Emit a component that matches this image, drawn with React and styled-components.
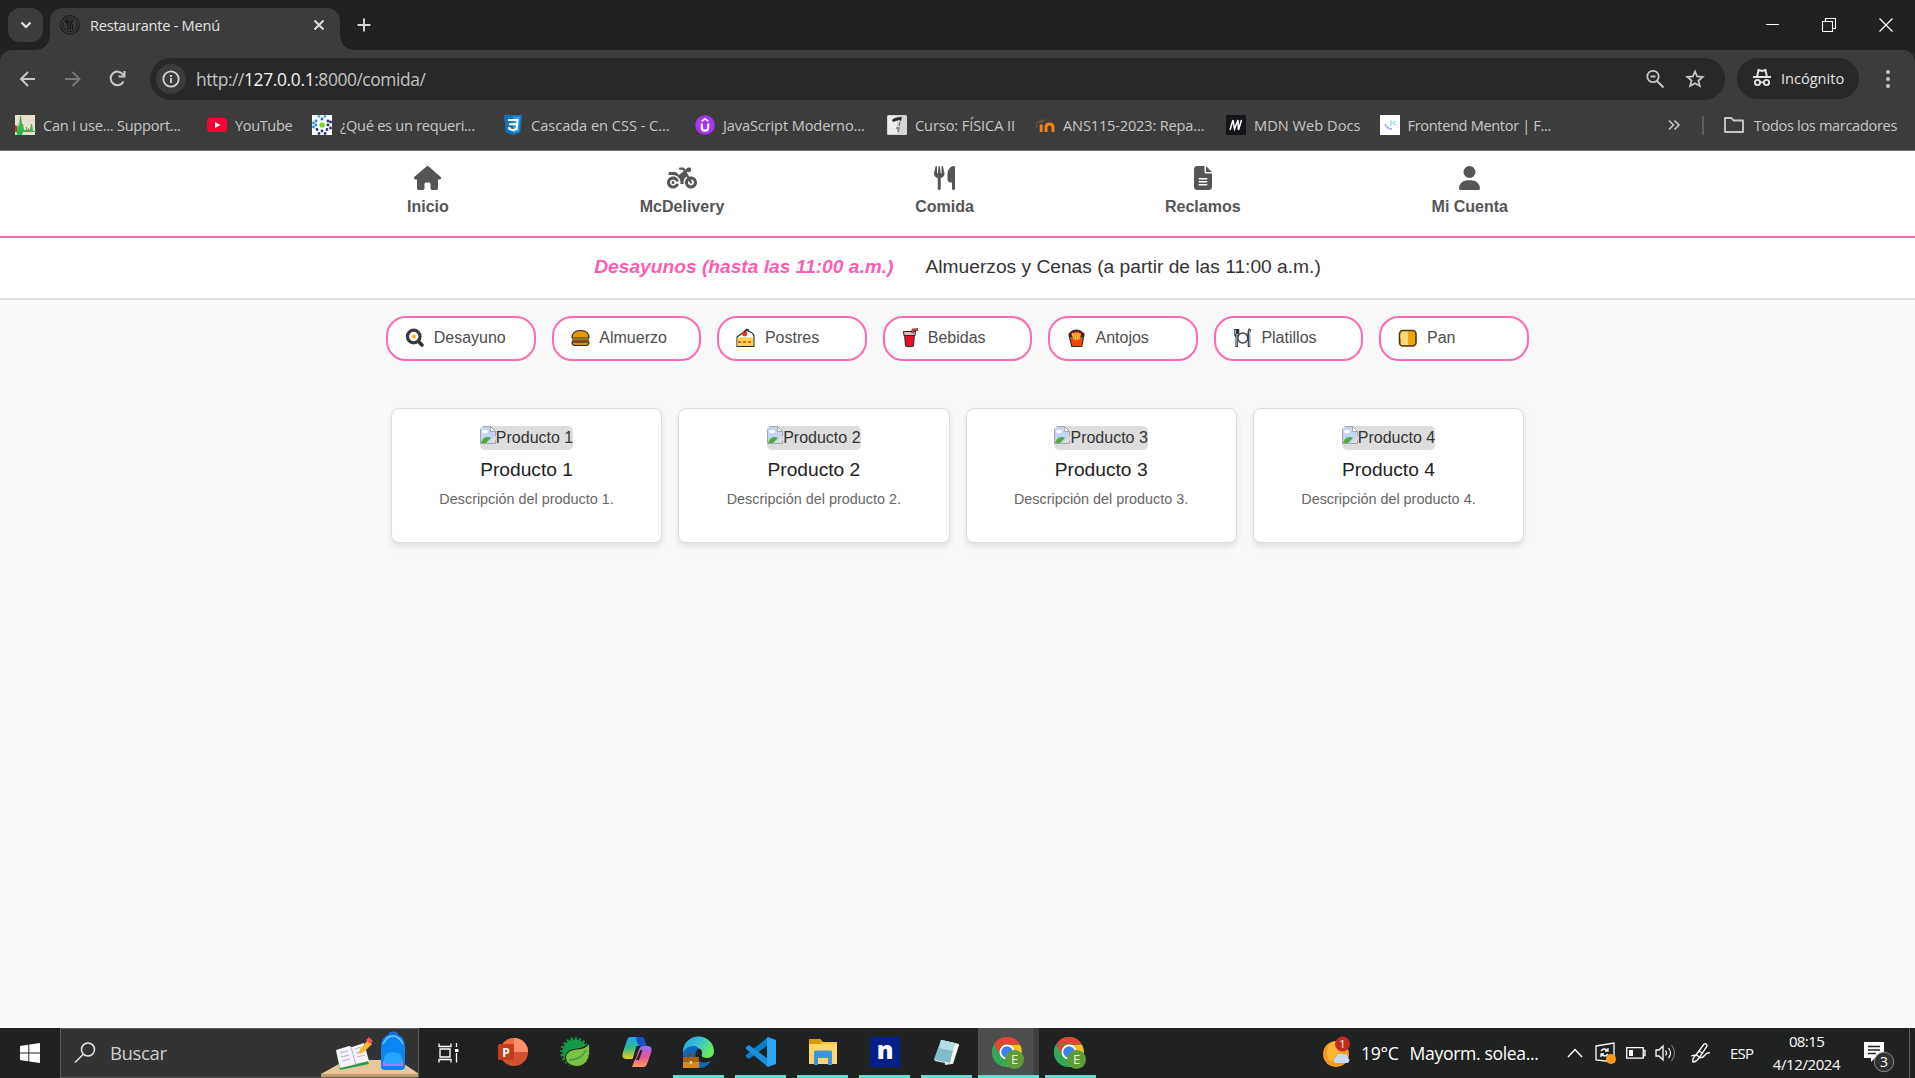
import React from "react";
import styled, { createGlobalStyle } from "styled-components";
import { FaHouse, FaMotorcycle, FaUtensils, FaFileLines, FaUser } from "react-icons/fa6";

const ui = `"Segoe UI", "Open Sans", "Noto Sans", sans-serif`;

const Global = createGlobalStyle`
  * { box-sizing: border-box; }
  body { margin: 0; overflow: hidden; font-family: Arial, "Liberation Sans", sans-serif; }
  svg { display: block; flex: none; overflow: visible; }
`;

const Screen = styled.div`
  width: 1915px;
  height: 1078px;
  display: flex;
  flex-direction: column;
  overflow: hidden;
`;

/* ---------- browser ---------- */
const TabStrip = styled.div`
  height: 50px;
  flex: none;
  background: #202221;
  display: flex;
  align-items: flex-end;
`;
const TabSearch = styled.div`
  width: 35px;
  height: 34px;
  margin: 0 7px 8px 8px;
  border-radius: 12px;
  background: #3c3c3c;
  display: flex;
  align-items: center;
  justify-content: center;
`;
const Tab = styled.div`
  position: relative;
  width: 290px;
  height: 42px;
  padding: 0 14px 8px 10px;
  border-radius: 13px 13px 0 0;
  background: #3c3c3c;
  display: flex;
  align-items: center;
  &::before, &::after {
    content: "";
    position: absolute;
    bottom: 0;
    width: 14px;
    height: 14px;
  }
  &::before { left: -14px; background: radial-gradient(circle at 0 0, transparent 13.5px, #3c3c3c 14px); }
  &::after { right: -14px; background: radial-gradient(circle at 100% 0, transparent 13.5px, #3c3c3c 14px); }
`;
const Label = styled.span`
  font-family: ${ui};
  font-size: ${(p) => p.$size || 15}px;
  letter-spacing: ${(p) => p.$ls || 0}px;
  color: ${(p) => p.$color || "#e3e3e3"};
  line-height: 22px;
  white-space: nowrap;
`;
const TabTitle = styled(Label)`
  flex: 1;
  margin-left: 10px;
`;
const NewTab = styled.div`
  margin: 0 0 18px 17px;
`;
const WindowButtons = styled.div`
  margin: 0 22px 18px auto;
  display: flex;
  gap: 43px;
`;
const ToolbarShell = styled.div`
  flex: none;
  height: 101px;
  background: #202221;
`;
const Toolbar = styled.div`
  height: 101px;
  background: #3c3c3c;
  border-radius: 12px 12px 0 0;
  border-bottom: 1px solid #747474;
`;
const AddressRow = styled.div`
  height: 50px;
  padding: 8px 17px 0 18px;
  display: flex;
  align-items: flex-start;
`;
const NavButtons = styled.div`
  width: 132px;
  height: 42px;
  display: flex;
  align-items: center;
  gap: 25px;
`;
const Omnibox = styled.div`
  width: 1575px;
  height: 42px;
  border-radius: 21px;
  background: #282828;
  padding: 0 20px 0 6px;
  display: flex;
  align-items: center;
`;
const InfoBadge = styled.div`
  width: 30px;
  height: 30px;
  border-radius: 50%;
  background: #3c3c3c;
  display: flex;
  align-items: center;
  justify-content: center;
  margin-right: 10px;
`;
const Url = styled(Label)`
  flex: 1;
  b { font-weight: 400; color: #f2f2f2; letter-spacing: -0.35px; }
`;
const OmniIcons = styled.div`
  display: flex;
  gap: 20px;
`;
const Incognito = styled.div`
  width: 122px;
  height: 41px;
  margin-left: 12px;
  padding: 0 0 2px 14px;
  border-radius: 21px;
  background: #282828;
  display: flex;
  align-items: center;
  gap: 8px;
`;
const Dots = styled.div`
  width: 20px;
  height: 42px;
  margin-left: auto;
  display: flex;
  flex-direction: column;
  align-items: center;
  justify-content: center;
  gap: 3px;
  i { width: 4px; height: 4px; border-radius: 50%; background: #c7c7c7; }
`;
const Bookmarks = styled.div`
  height: 50px;
  padding: 0 18px 0 15px;
  display: flex;
  align-items: center;
`;
const Bookmark = styled.div`
  width: ${(p) => p.$w}px;
  display: flex;
  align-items: center;
  gap: 8px;
  ${Label} { margin-top: -1px; }
`;
const AllBookmarks = styled.div`
  margin-left: auto;
  display: flex;
  align-items: center;
  ${Label} { margin: -1px 0 0 10px; }
`;
const Divider = styled.div`
  width: 2px;
  height: 19px;
  background: #5e5e5e;
  margin: 0 20px 0 22px;
`;

/* ---------- page ---------- */
const Page = styled.main`
  flex: 1;
  background: #f9f9f9;
`;
const MainNav = styled.nav`
  height: 87px;
  background: #fff;
  border-bottom: 2px solid #ff69b4;
  display: flex;
  justify-content: center;
  gap: 191px;
  padding-top: 15px;
`;
const NavLink = styled.a`
  display: flex;
  flex-direction: column;
  align-items: center;
  font-size: 16px;
  line-height: 18px;
  font-weight: 700;
  color: #555;
  gap: 8px;
  svg { width: ${(p) => p.$iw}px; height: 24px; }
`;
const Schedule = styled.div`
  height: 62px;
  background: #fff;
  border-bottom: 2px solid #e0e0e0;
  display: flex;
  justify-content: center;
  gap: 32px;
  padding-top: 18px;
  font-size: 19.2px;
  line-height: 22px;
`;
const ScheduleItem = styled.span`
  color: ${(p) => (p.$active ? "#ff5cb4" : "#333")};
  font-weight: ${(p) => (p.$active ? 700 : 400)};
  font-style: ${(p) => (p.$active ? "italic" : "normal")};
`;
const Categories = styled.div`
  display: flex;
  justify-content: center;
  gap: 16px;
  padding-top: 16px;
`;
const Pill = styled.div`
  width: 149.6px;
  height: 44.5px;
  border: 2px solid #ff69b4;
  border-radius: 20px;
  background: #fff;
  padding: 0 0 1px 17px;
  display: flex;
  align-items: center;
  font-size: 16px;
  line-height: 18px;
  color: #4d4d4d;
`;
const PillIcon = styled.span`
  width: ${(p) => p.$w}px;
  flex: none;
`;
const Products = styled.div`
  display: flex;
  justify-content: center;
  gap: 16px;
  padding-top: 47.5px;
`;
const Card = styled.article`
  width: 271.3px;
  height: 135px;
  background: #fff;
  border: 1px solid #ddd;
  border-radius: 8px;
  box-shadow: 0 4px 6px rgba(0, 0, 0, 0.1);
  padding-top: 17px;
  display: flex;
  flex-direction: column;
  align-items: center;
`;
const Missing = styled.div`
  height: 24px;
  border-radius: 5px;
  background: #ddd;
  display: flex;
  overflow: hidden;
  font-size: 16px;
  line-height: 23px;
  color: #333;
`;
const CardTitle = styled.h3`
  margin: 9px 0 10px;
  font-size: 19.2px;
  line-height: 22px;
  font-weight: 400;
  color: #222;
`;
const CardText = styled.p`
  margin: 0;
  font-size: 14.4px;
  line-height: 17px;
  color: #666;
`;

/* ---------- taskbar ---------- */
const Taskbar = styled.footer`
  flex: none;
  height: 50px;
  background: #202221;
  display: flex;
`;
const Start = styled.div`
  width: 60px;
  display: flex;
  align-items: center;
  justify-content: center;
`;
const SearchBox = styled.div`
  width: 359px;
  height: 50px;
  border: 1px solid #5c5c5c;
  background: #333;
  padding-left: 13px;
  display: flex;
  align-items: center;
  overflow: hidden;
`;
const SearchText = styled(Label)`
  flex: 1;
  margin-left: 14px;
`;
const TaskView = styled.div`
  width: 68px;
  padding-left: 19px;
  display: flex;
  align-items: center;
`;
const AppSlot = styled.div`
  width: ${(p) => p.$w || 51}px;
  margin-right: ${(p) => (p.$mr === undefined ? 11 : p.$mr)}px;
  background: ${(p) => (p.$active ? "linear-gradient(90deg, #4d4e4e 55px, #3d3e3e 56px)" : "none")};
  border-bottom: 3px solid ${(p) => (p.$open ? "#66dccf" : "transparent")};
  padding: ${(p) => p.$pad || "1px 0 0"};
  display: flex;
  align-items: center;
  justify-content: center;
`;
const Tray = styled.div`
  flex: 1;
  display: flex;
  align-items: center;
  justify-content: flex-end;
`;
const Weather = styled.div`
  width: 244px;
  display: flex;
  align-items: center;
  gap: 11px;
`;
const TrayIcon = styled.div`
  width: ${(p) => p.$w}px;
`;
const Clock = styled.div`
  width: 83px;
  display: flex;
  flex-direction: column;
  align-items: center;
  gap: 1px;
  padding-bottom: 2px;
`;
const Notice = styled.div`
  width: 61px;
  padding: 7px 0 0 16px;
`;
const DesktopEdge = styled.div`
  width: 6px;
  height: 50px;
  border-left: 1px solid #5f6160;
`;

/* ---------- drawings ---------- */
const S = ({ w = 20, h = w, vb, children }) => (
  <svg width={w} height={h} viewBox={vb || `0 0 ${w} ${h}`} fill="none">{children}</svg>
);
const line = (c = "#c7c7c7", w = 2) => ({ stroke: c, strokeWidth: w, fill: "none" });

const Favicon = () => (
  <S><circle cx="10" cy="10" r="9.3" {...line("#1c1c1c", 1.2)} /><circle cx="10" cy="10" r="6.8" {...line("#1c1c1c", 1)} />
    <path d="M7 5v3.5q0 1.5 1 1.5V15M6 5v3M8.3 5v4M12.5 5q-1.5 3 0 5v5M10.3 5v10" {...line("#1c1c1c", 1.3)} /></S>
);
const bmIcons = {
  caniuse: <S><path fill="#eadfcd" d="M0 0h20v20H0z" /><path fill="#c83b2c" d="M0 10l2 1 1 5h9l2-3 1 4h5v-1H0z" /><path fill="#36b34a" d="M0 16h2l1-8 1 4 1-11h1l1 8h1l1 6h2v-3h1v4h3l1-7h1l1 7h3v1H8l-1 3H2v-2l-2-1z" /></S>,
  youtube: <S><rect y="3" width="20" height="14" rx="3.5" fill="#f03" /><path d="M8 7l5.500 3L8 13z" fill="#fff" /></S>,
  que: <S><path fill="#fff" d="M0 0h20v20H0z" /><circle cx="10" cy="10" r="2.6" fill="#6ddc12" />
    {[[10,4,"#1c6fd0"],[7,1.4,"#45a9e8"],[13,1.4,"#45a9e8"],[4,6,"#2b86d9"],[16,6,"#27336f"],[1.5,8,"#2b86d9"],[1.5,12,"#2b86d9"],[4,10,"#2b86d9"],[16,10,"#27336f"],[18.5,7,"#27336f"],[18.5,13,"#27336f"],[5,14.5,"#27336f"],[10,16,"#27336f"],[15,14.5,"#27336f"],[7,18.5,"#27336f"],[13,18.5,"#27336f"]].map(([x,y,c]) => <circle key={`${x}-${y}`} cx={x} cy={y} r="1.4" fill={c} />)}</S>,
  css: <S><path fill="#1572b6" d="M1 0h18l-1.600 17.500L10 20l-7.400-2.500z" /><path fill="#2ca0dc" d="M10 1.500h7.400L16 16.500l-6 2z" /><path d="M5 5h9.500l-.9 9-3.600 1.300L6.300 14l-.2-2M14 9.300H6" {...line("#fff", 2)} /></S>,
  udemy: <S><circle cx="10" cy="10" r="9.8" fill="#a435f0" /><path d="M6.800 8.500v4.200q0 3 3.200 3t3.200-3V8.500" {...line("#fff", 2.2)} /><path d="M6.500 6.300L10 3.800l3.500 2.500" {...line("#fff", 1.6)} /></S>,
  fisica: <S><rect width="20" height="20" rx="1.5" fill="#d5d5d5" /><path fill="#eee" d="M1 1h9v18H1z" /><path fill="#2c2c2c" d="M5 5q2-3 10-3l-1 4-2-1-6 2z" /><path d="M13 7l-1 4M9 13l3 0-1 4" {...line("#777", 1.3)} /></S>,
  moodle: <S><path d="M0 8l7-4 3 1-2 3z" fill="#5d4c43" /><path d="M6.200 17V9.500" {...line("#f98012", 3)} /><path d="M11 17v-4.500q0-3.500 3.500-3.500t3.500 3.500V17" {...line("#f98012", 3)} /><path d="M1.500 8v5" {...line("#6c4b34", 1.5)} /></S>,
  mdn: <S><path fill="#15141a" d="M0 0h20v20H0z" /><path d="M4 15l3-10 1.500 9L12 5l.5 10L15.500 5" {...line("#fff", 1.5)} /></S>,
  fm: <S><path fill="#fff" d="M0 0h20v20H0z" /><path d="M5 9q2 5 7 5" {...line("#a9b4e4", 1.8)} /><path d="M11 5v6M15.500 6L13 8l2.500 2" {...line("#8fd8e8", 1.3)} /></S>,
};

const bookmarks = [
  ["caniuse", "Can I use... Support...", 192, -0.26],
  ["youtube", "YouTube", 105, -0.4],
  ["que", "¿Qué es un requeri...", 191, -0.28],
  ["css", "Cascada en CSS - C...", 192, -0.03],
  ["udemy", "JavaScript Moderno...", 192, -0.12],
  ["fisica", "Curso: FÍSICA II", 148, -0.1],
  ["moodle", "ANS115-2023: Repa...", 191, -0.17],
  ["mdn", "MDN Web Docs", 153.5, 0.02],
  ["fm", "Frontend Mentor | F...", 180, -0.35],
];

const ink = { stroke: "#2b2b2b", strokeWidth: 1.1, strokeLinejoin: "round" };
const emoji = {
  pan: <S><path d="M13 13l4 4" stroke="#333" strokeWidth="3.6" strokeLinecap="round" /><circle cx="8.7" cy="8.5" r="6.3" fill="#fff" stroke="#3a3a3a" strokeWidth="3.2" /><circle cx="9" cy="8.5" r="1.9" fill="#f9b21c" /></S>,
  burger: <S><path {...ink} fill="#e09a0a" d="M1 10q0-7.500 8.500-7.500T18 10z" /><path d="M1 11h17" stroke="#8a7a1f" strokeWidth="2" /><path d="M1 13h17" stroke="#a5522b" strokeWidth="2.2" /><path {...ink} fill="#d68f12" d="M1 14h17q0 3.500-3 3.500H4q-3 0-3-3.500z" /></S>,
  cake: <S><path {...ink} fill="#fff" d="M1 9l9-6.500q8 1.500 8 6.500v9.500H1z" /><path fill="#fbd44a" d="M1.500 9.500h15.500v8.500H1.500z" /><path d="M2 14h14" stroke="#e8602a" strokeWidth="2.2" strokeDasharray="3 2" /><path fill="#e03a20" d="M5.500 5q3-4 6 0l-1 3q-3 1-4-1z" /><path d="M8 4l3-2.500 2 1" stroke="#2b2b2b" strokeWidth="1.5" /></S>,
  drink: <S><path {...ink} fill="#e81224" d="M2.500 5h10l-1 13q-4 1.500-8 0z" /><path {...ink} fill="#e9b9bd" d="M1.500 3.500h12l-.5 4H2z" /><path d="M10 5l1-3 5-.5" stroke="#2b2b2b" strokeWidth="2.6" /><path d="M10 5l1-3 5-.5" stroke="#e8424f" strokeWidth="1.4" /></S>,
  fries: <S><path {...ink} fill="#8b1010" d="M2 6q7-8 15 0l-2 3H4z" /><path {...ink} fill="#f2450f" d="M2 7q7 6 15 0l-2.200 11.500h-10z" /><path fill="#fbb840" d="M4.500 5.500l1.500-1 1 1 1.500-1.500 1.500 1 1.500-1 1 1.500 1.500 0-1 5.500q-3 2-7 0z" /><path d="M7 5v6M9.500 4.500v7M12 5v6" stroke="#e47b18" strokeWidth=".8" /></S>,
  plate: <S><circle cx="9.8" cy="10" r="5" fill="#fff" stroke="#444" strokeWidth="1.5" /><path d="M2.500 1v5q0 2 1.300 2v11M5 1v5M17 1q-2 3-1 8v10" stroke="#29363d" strokeWidth="2.6" /><path d="M2.500 2v4M3.800 6v12M16.400 2v16" stroke="#9fc0cf" strokeWidth="1" /></S>,
  bread: <S><rect x="1.5" y="2.5" width="16.5" height="15.5" rx="3.5" fill="#eda508" stroke="#4a3615" strokeWidth="1.6" /><path fill="#ffd77c" d="M4.500 3.500h5.500v13.500H3.200V12q-1.500-3-.5-6.500z" /></S>,
};
const categories = [
  ["pan", "Desayuno", 28.8], ["burger", "Almuerzo", 28.8], ["cake", "Postres", 28.8], ["drink", "Bebidas", 26], ["fries", "Antojos", 28.2], ["plate", "Platillos", 28.5], ["bread", "Pan", 28.5],
];

const BrokenImage = () => (
  <S w={16} h={18}><path d="M.5 .5h10l5 5v12H.5z" fill="#c3d5f5" stroke="#a5a5a5" /><path d="M10.500 .5v5h5z" fill="#fff" stroke="#a5a5a5" /><ellipse cx="5" cy="5.5" rx="3" ry="1.8" fill="#fff" /><path d="M1 17q2-6 6-6 3 0 4 1l-5 5z" fill="#53a93f" /><path d="M7 18L16 9.500V18z" fill="#ddd" /><path d="M8 17.500h7.500v-3" stroke="#a5a5a5" fill="none" /></S>
);

const Chrome = () => (
  <S w={33} h={34}><circle cx="15" cy="15" r="15" fill="#34a853" /><path d="M2 7.500A15 15 0 0 1 28 7.500H15z" fill="#ea4335" /><path d="M15 8h13A15 15 0 0 1 15 30l6.500-11z" fill="#fbc116" /><path d="M2 7.500l6.800 11.500L15 8z" fill="#ea4335" /><path d="M2 7.500L9 19.500 15 22.500 13 30A15 15 0 0 1 2 7.500z" fill="#34a853" /><circle cx="15" cy="15" r="7.5" fill="#fff" /><circle cx="15" cy="15" r="5.8" fill="#3b82ee" /><circle cx="22.5" cy="22.5" r="9.5" fill="#5f9b38" /><text x="22.5" y="27.3" textAnchor="middle" fontFamily="Open Sans" fontSize="13" fill="#e6f2dc">E</text></S>
);
const appIcons = {
  ppt: <S w={30}><circle cx="16" cy="15" r="14" fill="#d35230" /><path d="M16 1A14 14 0 0 0 2 15h14z" fill="#ed6c47" /><path d="M16 1a14 14 0 0 1 14 14H16z" fill="#ff8f6b" /><rect y="7" width="16" height="16" rx="1.5" fill="#c43e1c" /><text x="8" y="19.5" textAnchor="middle" fontFamily="Open Sans" fontWeight="700" fontSize="12" fill="#fff">P</text></S>,
  spring: <S w={30}><circle cx="15" cy="15" r="12.5" fill="#159947" /><circle cx="15" cy="15" r="13.5" fill="none" stroke="#159947" strokeWidth="2.5" strokeDasharray="2.2 2" /><path d="M30 4Q31 30 16 30 5 29 5 20 6 12 17 11.500 26 11 30 4z" fill="#202221" /><path d="M29 7q2 22-13 22-10-1-10-9 1-7 11-7.500Q26 12 29 7z" fill="#7bc142" /><path d="M9 23q12 0 17-10" {...line("#3b9b45", 1.5)} /></S>,
  copilot: <S w={30} h={32}>
    <defs><linearGradient id="cpA" x1="0" y1="0" x2="0" y2="1"><stop offset="0" stopColor="#1ca9f5" /><stop offset=".5" stopColor="#31bd85" /><stop offset="1" stopColor="#f6cd20" /></linearGradient><linearGradient id="cpB" x1="0" y1="0" x2="0" y2="1"><stop offset="0" stopColor="#9a6cf3" /><stop offset=".5" stopColor="#e5559a" /><stop offset="1" stopColor="#ff9a63" /></linearGradient></defs>
    <path d="M8 1h12l-6 20q-1 2-4 2H4q-5 0-3-7L5 4q1-3 3-3z" fill="url(#cpA)" /><path d="M14 1h6q2 0 3 4l2 5h-6q-3 0-4-4z" fill="#1b50c8" /><path d="M21 10h5q5 0 3 7l-4 11q-1 3-4 3H10l7-18q1-3 4-3z" fill="url(#cpB)" /><path d="M14.500 10h3.500l-4.500 13h-3z" fill="#202221" /><path d="M18.500 14l2 0-3.500 10h-3z" fill="#202221" /></S>,
  edge: <S w={31}>
    <defs><linearGradient id="edA" x1="0" y1="0" x2="1" y2=".5"><stop offset="0" stopColor="#2b9fe0" /><stop offset=".5" stopColor="#35c1d8" /><stop offset="1" stopColor="#6bea5b" /></linearGradient></defs>
    <path d="M0 15A15.500 15 0 0 1 31 14q0 7-7 7-7-.5-5-4 1-6-6-6Q3 11 0 20z" fill="url(#edA)" /><path d="M0 16q3-8 12-7 3 .5 3 3-4 4-2 9 4 7 15 3-5 8-14 7Q0 29 0 16z" fill="#1268b8" /><path d="M0 20h16v11H0z" fill="#d78a1c" /><path d="M0 20h16v5H0z" fill="#a96012" /><path d="M5 20v-2h6v2" {...line("#7f4a14", 1.5)} /><path d="M7 24h2v3H7z" fill="#ffe08a" /></S>,
  vscode: <S w={30}><path d="M22 0v8L3 22 0 20v-2z" fill="#0a7cc8" /><path d="M22 30v-8L3 8 0 10v2z" fill="#1a8fdb" /><path d="M22 0l8 3v24l-8 3-1-1V1z" fill="#2ba4f3" /></S>,
  folder: <S w={28} h={28}><path d="M0 1h11l3 3h14v22H0z" fill="#f8c73e" /><path d="M0 1h11l2 3-2 2H0z" fill="#dc9a0b" /><path d="M0 6h28v20H0z" fill="#ffd766" /><path d="M5 14q0-1.500 1.500-1.500h15q1.500 0 1.500 1.500v13h-4v-7H9v7H5z" fill="#3a95dc" /></S>,
  n: <S w={30}><path fill="#03208a" d="M0 0h30v30H0z" /><text x="15" y="22" textAnchor="middle" fontFamily="Open Sans" fontWeight="800" fontSize="25" fill="#fff">n</text></S>,
  notepad: <S w={28} h={28}><path d="M9 2l17 4-7 20-7 1z" fill="#e6e5df" /><path d="M8 2l14 3-5 20L1 21z" fill="#82bccb" /><path d="M8 2l14 3-2 8-14-3z" fill="#b7dce3" /><path d="M22 5l4 2-6 19-3-1z" fill="#f6f5f0" /><path d="M1 21l16 4v1L2 23z" fill="#d9e5e8" /></S>,
};

const apps = [
  { icon: "ppt" }, { icon: "spring" }, { icon: "copilot" }, { icon: "edge", open: 1 }, { icon: "vscode", open: 1 },
  { icon: "folder", open: 1 }, { icon: "n", open: 1 }, { icon: "notepad", open: 1, mr: 6 },
];

export default function App() {
  return (
    <Screen>
      <Global />
      <TabStrip>
        <TabSearch><S w={12}><path d="M1.500 3.500L6 8l4.500-4.500" {...line("#e3e3e3", 2.2)} /></S></TabSearch>
        <Tab>
          <Favicon />
          <TabTitle $size={14.6} $ls={-0.25}>Restaurante - Menú</TabTitle>
          <S w={14}><path d="M2.500 2.500l9 9M11.500 2.500l-9 9" {...line("#e3e3e3", 1.8)} /></S>
        </Tab>
        <NewTab><S w={14}><path d="M7 .5v13M.5 7h13" {...line("#d6d6d6", 1.9)} /></S></NewTab>
        <WindowButtons>
          <S w={14}><path d="M1 6.500h13" {...line("#fff", 1)} /></S>
          <S w={14}><path d="M.5 3.500h10v10H.5zM3.500 3V.5h10v10H11" {...line("#fff", 1.1)} /></S>
          <S w={14}><path d="M.5 .5l13 13M13.500 .5l-13 13" {...line("#fff", 1.2)} /></S>
        </WindowButtons>
      </TabStrip>
      <ToolbarShell>
        <Toolbar>
          <AddressRow>
            <NavButtons>
              <S><path d="M17 10H3.500M10 3l-7 7 7 7" {...line()} /></S>
              <S><path d="M2 10h13.500M9.500 3l7 7-7 7" {...line("#777")} /></S>
              <S><path d="M15.500 12.500A6.800 6.800 0 1 1 15 5.500L16.500 7.500M16.500 2V7.500h-6" {...line()} /></S>
            </NavButtons>
            <Omnibox>
              <InfoBadge><S w={18}><circle cx="9" cy="9" r="7.7" {...line("#d6d6d6", 1.8)} /><path d="M9 8v5M9 5v2" {...line("#d6d6d6", 1.8)} /></S></InfoBadge>
              <Url $size={17.4} $ls={-0.43} $color="#c3c3c3">http://<b>127.0.0.1</b>:8000/comida/</Url>
              <OmniIcons>
                <S><circle cx="8" cy="7.5" r="5.7" {...line("#c7c7c7", 1.8)} /><path d="M12 12l6.500 6.500M5.500 7.500h5" {...line()} /></S>
                <S><path d="M10 2.500l2.200 5 5.500.5-4.200 3.600 1.300 5.400L10 14.200 5.200 17l1.300-5.400L2.300 8l5.500-.5z" {...line("#c7c7c7", 1.8)} /></S>
              </OmniIcons>
            </Omnibox>
            <Incognito>
              <S w={22}><path d="M6 10l1.500-7 3.500 1 3.500-1L16 10z" {...line("#e3e3e3", 2)} /><path d="M2 10h18" {...line("#e3e3e3", 2)} /><circle cx="6.5" cy="15.5" r="2.6" {...line("#e3e3e3", 1.9)} /><circle cx="15.5" cy="15.5" r="2.6" {...line("#e3e3e3", 1.9)} /><path d="M9 15.300h4" {...line("#e3e3e3", 1.8)} /></S>
              <Label $size={14.6} $ls={-0.02}>Incógnito</Label>
            </Incognito>
            <Dots><i /><i /><i /></Dots>
          </AddressRow>
          <Bookmarks>
            {bookmarks.map(([k, t, w, ls]) => (
              <Bookmark key={k} $w={w}>{bmIcons[k]}<Label $size={14.6} $ls={ls} $color="#c7c7c7">{t}</Label></Bookmark>
            ))}
            <AllBookmarks>
              <S w={12}><path d="M1 1.500L5.500 6 1 10.500M6.500 1.500L11 6l-4.500 4.500" {...line("#c7c7c7", 1.6)} /></S>
              <Divider />
              <S w={20} h={18}><path d="M1 2h6.500l2 2.500H19V16H1z" strokeLinejoin="round" {...line("#c7c7c7", 1.9)} /></S>
              <Label $size={14.6} $ls={-0.34} $color="#c7c7c7">Todos los marcadores</Label>
            </AllBookmarks>
          </Bookmarks>
        </Toolbar>
      </ToolbarShell>

      <Page>
        <MainNav>
          <NavLink $iw={27}><FaHouse />Inicio</NavLink>
          <NavLink $iw={30}><FaMotorcycle />McDelivery</NavLink>
          <NavLink $iw={21}><FaUtensils />Comida</NavLink>
          <NavLink $iw={18}><FaFileLines />Reclamos</NavLink>
          <NavLink $iw={21}><FaUser />Mi Cuenta</NavLink>
        </MainNav>
        <Schedule>
          <ScheduleItem $active>Desayunos (hasta las 11:00 a.m.)</ScheduleItem>
          <ScheduleItem>Almuerzos y Cenas (a partir de las 11:00 a.m.)</ScheduleItem>
        </Schedule>
        <Categories>
          {categories.map(([k, t, w]) => <Pill key={k}><PillIcon $w={w}>{emoji[k]}</PillIcon>{t}</Pill>)}
        </Categories>
        <Products>
          {[1, 2, 3, 4].map((n) => (
            <Card key={n}>
              <Missing><BrokenImage />Producto {n}</Missing>
              <CardTitle>Producto {n}</CardTitle>
              <CardText>Descripción del producto {n}.</CardText>
            </Card>
          ))}
        </Products>
      </Page>

      <Taskbar>
        <Start><S><path fill="#fff" d="M0 3l8.300-1.200v7.700H0zM9.300 1.600L20 0v9.500H9.300zM0 10.500h8.300v7.700L0 17zM9.300 10.500H20V20L9.300 18.400z" /></S></Start>
        <SearchBox>
          <S w={22}><circle cx="14" cy="7.5" r="6.5" {...line("#e8e8e8", 1.5)} /><path d="M9.500 12L1 20.500" {...line("#e8e8e8", 1.5)} /></S>
          <SearchText $size={18.6} $ls={-0.4} $color="#cfcfcf">Buscar</SearchText>
          <S w={97} h={50}>
            <path d="M0 46l25-14h52l21 14z" fill="#e9c79b" /><path d="M0 46h98v4H0z" fill="#c09a6a" />
            <path d="M15 24l4 18 29-6-3-7z" fill="#2f9a48" /><path d="M15 22l13-4 3 1 12-4 5 18-13 3-3 1-13 3z" fill="#f6f3fb" /><path d="M30 19l5 18" {...line("#b9b2cf", 1)} /><path d="M19 25l8-2M20 29l8-2M21 33l8-2M34 21l6-2M35 25l8-2M36 29l8-2" {...line("#aaa3bf", 0.8)} />
            <path d="M38 26l1-5 8-9 4 4-8 8z" fill="#f8b632" /><path d="M45 12l3-3 4 4-3 3z" fill="#ef5a4c" />
            <path d="M68 8q0-3.500 4-3.500T76.500 8" {...line("#1673e8", 2)} /><path d="M60 20q0-14 12-14t12 14v18q0 4-4 4H64q-4 0-4-4z" fill="#0b84f4" /><path d="M62 16q4-8 10-8t10 8" {...line("#7cc8ff", 1.3)} /><path d="M63 30q1-6 9-6t9 6v6H63z" fill="#26a5ff" /><path d="M63 33v4h18v-4" {...line("#a77bff", 2)} />
          </S>
        </SearchBox>
        <TaskView><S w={21}><path d="M1 .5v3h12v-3M1 19.500v-3h12v3M2 6h10v8H2zM18.500 0v4M18.500 10v9.500" {...line("#fff", 1.3)} /><path fill="#fff" d="M17 6h3.500v3H17z" /></S></TaskView>
        {apps.map((a) => <AppSlot key={a.icon} $open={a.open} $mr={a.mr}>{appIcons[a.icon]}</AppSlot>)}
        <AppSlot $w={61} $mr={6} $open $active $pad="5px 0 0"><Chrome /></AppSlot>
        <AppSlot $open $pad="5px 0 0"><Chrome /></AppSlot>
        <Tray>
          <Weather>
            <S w={27} h={34}><circle cx="13" cy="18" r="13" fill="#f59a1d" /><path d="M6 8q10-6 16 1L8 26q-7-5-2-18z" fill="#fbb63a" /><path d="M12 27q-3-4 1-6 2-5 7-3 5 0 5 4 3 2 0 5z" fill="#c6dbf8" /><circle cx="19.5" cy="8" r="7.5" fill="#c42b1c" /><text x="19.5" y="12" textAnchor="middle" fontFamily="Open Sans" fontSize="11" fill="#fff">1</text></S>
            <Label $size={17.6} $ls={-0.3} $color="#fff">19°C</Label>
            <Label $size={17.6} $ls={-0.35} $color="#fff">Mayorm. solea...</Label>
          </Weather>
          <TrayIcon $w={28}><S w={16}><path d="M1 12l7-7.500 7 7.500" {...line("#fff", 1.4)} /></S></TrayIcon>
          <TrayIcon $w={31}><S w={21} h={22}><path d="M1 4l18-3v19L1 18z" {...line("#fff", 1.3)} /><path d="M6 9q3-4 7 0M13 6v3h-3M13 12q-3 4-7 0M6 15v-3h3" {...line("#fff", 1.3)} /><circle cx="16" cy="17" r="5" fill="#ff9a1a" /></S></TrayIcon>
          <TrayIcon $w={29}><S w={20} h={12}><path d="M.7 .7h16.500v10.500H.7zM17.500 3.500H19v5h-1.500" {...line("#fff", 1.3)} /><path d="M3 3h4v6H3z" fill="#fff" /></S></TrayIcon>
          <TrayIcon $w={35}><S w={21} h={20}><path d="M1 7h3l4-4v14l-4-4H1z" {...line("#fff", 1.3)} /><path d="M10.500 7.500q2 2.500 0 5M13.500 5q4 5 0 10" {...line("#fff", 1.2)} /><path d="M16.500 2q6 8 0 16" {...line("#777", 1.2)} /></S></TrayIcon>
          <TrayIcon $w={40}><S w={21} h={24}><path d="M6 14L14 3q3-1 3 2L9 17q-3 4-6 4-1-4 3-7zM1 15q6-2 8 1 3 2 6-2 2-3 5-2M9 10l4 2.500" {...line("#fff", 1.3)} /></S></TrayIcon>
          <TrayIcon $w={35}><Label $size={15} $ls={-0.8} $color="#fff">ESP</Label></TrayIcon>
          <Clock>
            <Label $size={15} $ls={-0.6} $color="#fff">08:15</Label>
            <Label $size={15} $ls={-0.4} $color="#fff">4/12/2024</Label>
          </Clock>
          <Notice><S w={32} h={34}><path d="M0 2h20v16h-9l-4 4v-4H0z" fill="#fff" /><path d="M4 6.500h12M4 10h12M4 13.500h8" {...line("#202221", 1.3)} /><circle cx="20" cy="22" r="9.7" fill="#303231" stroke="#8c8c8c" /><text x="20" y="27" textAnchor="middle" fontFamily="Open Sans" fontSize="14" fill="#fff">3</text></S></Notice>
          <DesktopEdge />
        </Tray>
      </Taskbar>
    </Screen>
  );
}
